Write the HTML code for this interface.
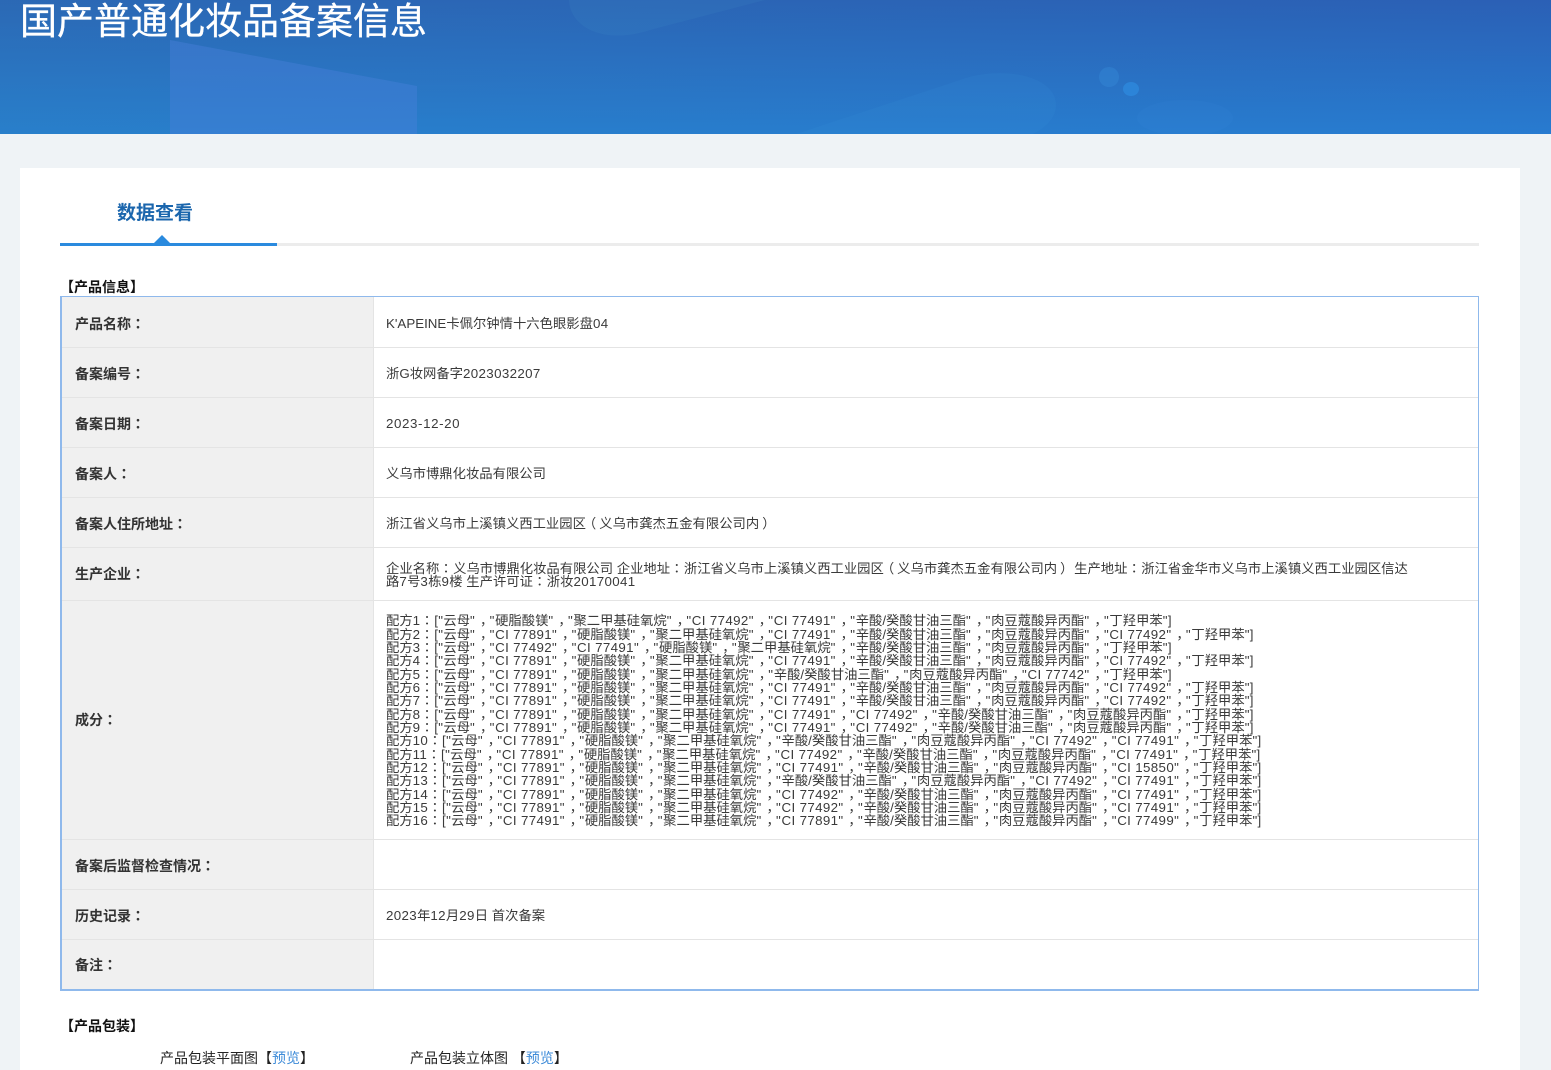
<!DOCTYPE html>
<html><head><meta charset="utf-8"><title>国产普通化妆品备案信息</title>
<style>
*{box-sizing:border-box}
html,body{margin:0;padding:0}
body{width:1551px;height:1070px;overflow:hidden;position:relative;background:#eff3f6;font-family:"Liberation Sans","Noto Sans CJK SC",sans-serif;font-size:13.33px;color:#333}
.hd{position:absolute;left:0;top:0;width:1551px;height:134px;overflow:hidden;background:linear-gradient(90deg,rgba(44,125,185,.3),rgba(42,95,195,.15)),linear-gradient(180deg,#2b60b3,#2780d2)}
.hd svg{position:absolute;left:0;top:0}
h1{position:absolute;left:20px;top:-5px;margin:0;font-size:37px;line-height:54px;font-weight:400;color:#fff;white-space:nowrap;-webkit-text-stroke:.3px #fff}
.card{position:absolute;left:20px;top:168px;width:1500px;height:902px;background:#fff}
.tab{position:absolute;left:117px;top:199px;font-size:19px;line-height:28px;font-weight:700;color:#1b66ad;white-space:nowrap;transform:translateY(1px)}
.ln{position:absolute;left:60px;top:243px;width:1419px;height:3px;background:#ececec}
.ln2{position:absolute;left:60px;top:243px;width:217px;height:3px;background:#2a8ade}
.tri{position:absolute;left:154px;top:235px;width:0;height:0;border-left:8px solid transparent;border-right:8px solid transparent;border-bottom:8px solid #2a8ade}
.sec{position:absolute;font-size:14px;font-weight:700;color:#111;white-space:nowrap;line-height:18px}
.tbl{position:absolute;left:60px;top:296px;width:1419px;height:695px;border:2px solid #8fb9ec;border-width:1px 1px 2px 2px}
.lab{position:absolute;left:0;top:0;width:312px;height:100%;background:#f0f0f0;border-right:1px solid #e4e4e4}
.r{position:absolute;left:0;width:1416px;border-bottom:1px solid #e4e4e4;display:flex;align-items:center}
.r.last{border-bottom:0}
.r b{position:absolute;left:13px;font-size:14px;color:#333;white-space:nowrap;transform:translateY(1px)}
.r span{position:absolute;left:324px;width:1030px;color:#3a3a3a;line-height:13.33px;transform:translateY(1px)}
.pk{position:absolute;top:1049px;font-size:14px;color:#222;line-height:18px;white-space:nowrap}
.pk a{color:#3d8bd8}
i{font-style:normal;font-family:"Liberation Sans","Noto Sans CJK TC",sans-serif;font-feature-settings:"locl" 0}
.r span i{letter-spacing:.5px}
s{text-decoration:none;letter-spacing:.75px}
tt{font-family:inherit;position:relative;left:4.5px}
u{text-decoration:none;letter-spacing:.35px}
em{font-style:normal;position:relative}
</style></head><body>
<div class="hd">
<svg width="1551" height="134" viewBox="0 0 1551 134">
<path d="M170 40L417 86V134H170Z" fill="#4a80dc" fill-opacity=".42"/>
<path d="M569 0C570 28 605 45 650 30L765 0Z" fill="#4d9ad0" fill-opacity=".12"/>
<path d="M796 134L960 80C1000 65 1056 75 1056 105C1056 118 1045 128 1033 134Z" fill="#3a92dc" fill-opacity=".14"/>
<ellipse cx="1109" cy="77" rx="10" ry="10" fill="#3a8fdc" fill-opacity=".35"/>
<ellipse cx="1131" cy="89" rx="8" ry="7" fill="#2f8fe4" fill-opacity=".6"/>
<ellipse cx="1185" cy="118" rx="48" ry="18" fill="#3a8fe0" fill-opacity=".12"/>
</svg>
<h1>国产普通化妆品备案信息</h1>
</div>
<div class="card"></div>
<div class="tab">数据查看</div>
<div class="ln"></div><div class="ln2"></div><div class="tri"></div>
<div class="sec" style="left:60px;top:278px">【产品信息】</div>
<div class="tbl">
<div class="lab"></div>
<div class="r" style="top:1px;height:50px"><b>产品名称<i>：</i></b><span>K'APEINE卡佩尔钟情十六色眼影盘<u>04</u></span></div>
<div class="r" style="top:51px;height:50px"><b>备案编号<i>：</i></b><span>浙G妆网备字<u>2023032207</u></span></div>
<div class="r" style="top:101px;height:50px"><b>备案日期<i>：</i></b><span><u style="letter-spacing:.6px">2023-12-20</u></span></div>
<div class="r" style="top:151px;height:50px"><b>备案人<i>：</i></b><span>义乌市博鼎化妆品有限公司</span></div>
<div class="r" style="top:201px;height:50px"><b>备案人住所地址<i>：</i></b><span>浙江省义乌市上溪镇义西工业园区<em style="left:-3px">（</em>义乌市龚杰五金有限公司内<em style="left:3px">）</em></span></div>
<div class="r" style="top:251px;height:53px"><b style="transform:none">生产企业<i>：</i></b><span>企业名称<i>：</i>义乌市博鼎化妆品有限公司 企业地址<i>：</i>浙江省义乌市上溪镇义西工业园区<em style="left:-3px">（</em>义乌市龚杰五金有限公司内<em style="left:3px">）</em> 生产地址<i>：</i>浙江省金华市义乌市上溪镇义西工业园区信达路<u>7</u>号<u>3</u>栋<u>9</u>楼 生产许可证<i>：</i>浙妆<u>20170041</u></span></div>
<div class="r" style="top:304px;height:239px"><b style="transform:none">成分<i>：</i></b><span>配方<u>1</u><i>：</i><u>["</u>云母<s>"<tt>，</tt>"</s>硬脂酸镁<s>"<tt>，</tt>"</s>聚二甲基硅氧烷<s>"<tt>，</tt>"</s><u>CI 77492</u><s>"<tt>，</tt>"</s><u>CI 77491</u><s>"<tt>，</tt>"</s>辛酸/癸酸甘油三酯<s>"<tt>，</tt>"</s>肉豆蔻酸异丙酯<s>"<tt>，</tt>"</s>丁羟甲苯<u>"]</u><br>
配方<u>2</u><i>：</i><u>["</u>云母<s>"<tt>，</tt>"</s><u>CI 77891</u><s>"<tt>，</tt>"</s>硬脂酸镁<s>"<tt>，</tt>"</s>聚二甲基硅氧烷<s>"<tt>，</tt>"</s><u>CI 77491</u><s>"<tt>，</tt>"</s>辛酸/癸酸甘油三酯<s>"<tt>，</tt>"</s>肉豆蔻酸异丙酯<s>"<tt>，</tt>"</s><u>CI 77492</u><s>"<tt>，</tt>"</s>丁羟甲苯<u>"]</u><br>
配方<u>3</u><i>：</i><u>["</u>云母<s>"<tt>，</tt>"</s><u>CI 77492</u><s>"<tt>，</tt>"</s><u>CI 77491</u><s>"<tt>，</tt>"</s>硬脂酸镁<s>"<tt>，</tt>"</s>聚二甲基硅氧烷<s>"<tt>，</tt>"</s>辛酸/癸酸甘油三酯<s>"<tt>，</tt>"</s>肉豆蔻酸异丙酯<s>"<tt>，</tt>"</s>丁羟甲苯<u>"]</u><br>
配方<u>4</u><i>：</i><u>["</u>云母<s>"<tt>，</tt>"</s><u>CI 77891</u><s>"<tt>，</tt>"</s>硬脂酸镁<s>"<tt>，</tt>"</s>聚二甲基硅氧烷<s>"<tt>，</tt>"</s><u>CI 77491</u><s>"<tt>，</tt>"</s>辛酸/癸酸甘油三酯<s>"<tt>，</tt>"</s>肉豆蔻酸异丙酯<s>"<tt>，</tt>"</s><u>CI 77492</u><s>"<tt>，</tt>"</s>丁羟甲苯<u>"]</u><br>
配方<u>5</u><i>：</i><u>["</u>云母<s>"<tt>，</tt>"</s><u>CI 77891</u><s>"<tt>，</tt>"</s>硬脂酸镁<s>"<tt>，</tt>"</s>聚二甲基硅氧烷<s>"<tt>，</tt>"</s>辛酸/癸酸甘油三酯<s>"<tt>，</tt>"</s>肉豆蔻酸异丙酯<s>"<tt>，</tt>"</s><u>CI 77742</u><s>"<tt>，</tt>"</s>丁羟甲苯<u>"]</u><br>
配方<u>6</u><i>：</i><u>["</u>云母<s>"<tt>，</tt>"</s><u>CI 77891</u><s>"<tt>，</tt>"</s>硬脂酸镁<s>"<tt>，</tt>"</s>聚二甲基硅氧烷<s>"<tt>，</tt>"</s><u>CI 77491</u><s>"<tt>，</tt>"</s>辛酸/癸酸甘油三酯<s>"<tt>，</tt>"</s>肉豆蔻酸异丙酯<s>"<tt>，</tt>"</s><u>CI 77492</u><s>"<tt>，</tt>"</s>丁羟甲苯<u>"]</u><br>
配方<u>7</u><i>：</i><u>["</u>云母<s>"<tt>，</tt>"</s><u>CI 77891</u><s>"<tt>，</tt>"</s>硬脂酸镁<s>"<tt>，</tt>"</s>聚二甲基硅氧烷<s>"<tt>，</tt>"</s><u>CI 77491</u><s>"<tt>，</tt>"</s>辛酸/癸酸甘油三酯<s>"<tt>，</tt>"</s>肉豆蔻酸异丙酯<s>"<tt>，</tt>"</s><u>CI 77492</u><s>"<tt>，</tt>"</s>丁羟甲苯<u>"]</u><br>
配方<u>8</u><i>：</i><u>["</u>云母<s>"<tt>，</tt>"</s><u>CI 77891</u><s>"<tt>，</tt>"</s>硬脂酸镁<s>"<tt>，</tt>"</s>聚二甲基硅氧烷<s>"<tt>，</tt>"</s><u>CI 77491</u><s>"<tt>，</tt>"</s><u>CI 77492</u><s>"<tt>，</tt>"</s>辛酸/癸酸甘油三酯<s>"<tt>，</tt>"</s>肉豆蔻酸异丙酯<s>"<tt>，</tt>"</s>丁羟甲苯<u>"]</u><br>
配方<u>9</u><i>：</i><u>["</u>云母<s>"<tt>，</tt>"</s><u>CI 77891</u><s>"<tt>，</tt>"</s>硬脂酸镁<s>"<tt>，</tt>"</s>聚二甲基硅氧烷<s>"<tt>，</tt>"</s><u>CI 77491</u><s>"<tt>，</tt>"</s><u>CI 77492</u><s>"<tt>，</tt>"</s>辛酸/癸酸甘油三酯<s>"<tt>，</tt>"</s>肉豆蔻酸异丙酯<s>"<tt>，</tt>"</s>丁羟甲苯<u>"]</u><br>
配方<u>10</u><i>：</i><u>["</u>云母<s>"<tt>，</tt>"</s><u>CI 77891</u><s>"<tt>，</tt>"</s>硬脂酸镁<s>"<tt>，</tt>"</s>聚二甲基硅氧烷<s>"<tt>，</tt>"</s>辛酸/癸酸甘油三酯<s>"<tt>，</tt>"</s>肉豆蔻酸异丙酯<s>"<tt>，</tt>"</s><u>CI 77492</u><s>"<tt>，</tt>"</s><u>CI 77491</u><s>"<tt>，</tt>"</s>丁羟甲苯<u>"]</u><br>
配方<u>11</u><i>：</i><u>["</u>云母<s>"<tt>，</tt>"</s><u>CI 77891</u><s>"<tt>，</tt>"</s>硬脂酸镁<s>"<tt>，</tt>"</s>聚二甲基硅氧烷<s>"<tt>，</tt>"</s><u>CI 77492</u><s>"<tt>，</tt>"</s>辛酸/癸酸甘油三酯<s>"<tt>，</tt>"</s>肉豆蔻酸异丙酯<s>"<tt>，</tt>"</s><u>CI 77491</u><s>"<tt>，</tt>"</s>丁羟甲苯<u>"]</u><br>
配方<u>12</u><i>：</i><u>["</u>云母<s>"<tt>，</tt>"</s><u>CI 77891</u><s>"<tt>，</tt>"</s>硬脂酸镁<s>"<tt>，</tt>"</s>聚二甲基硅氧烷<s>"<tt>，</tt>"</s><u>CI 77491</u><s>"<tt>，</tt>"</s>辛酸/癸酸甘油三酯<s>"<tt>，</tt>"</s>肉豆蔻酸异丙酯<s>"<tt>，</tt>"</s><u>CI 15850</u><s>"<tt>，</tt>"</s>丁羟甲苯<u>"]</u><br>
配方<u>13</u><i>：</i><u>["</u>云母<s>"<tt>，</tt>"</s><u>CI 77891</u><s>"<tt>，</tt>"</s>硬脂酸镁<s>"<tt>，</tt>"</s>聚二甲基硅氧烷<s>"<tt>，</tt>"</s>辛酸/癸酸甘油三酯<s>"<tt>，</tt>"</s>肉豆蔻酸异丙酯<s>"<tt>，</tt>"</s><u>CI 77492</u><s>"<tt>，</tt>"</s><u>CI 77491</u><s>"<tt>，</tt>"</s>丁羟甲苯<u>"]</u><br>
配方<u>14</u><i>：</i><u>["</u>云母<s>"<tt>，</tt>"</s><u>CI 77891</u><s>"<tt>，</tt>"</s>硬脂酸镁<s>"<tt>，</tt>"</s>聚二甲基硅氧烷<s>"<tt>，</tt>"</s><u>CI 77492</u><s>"<tt>，</tt>"</s>辛酸/癸酸甘油三酯<s>"<tt>，</tt>"</s>肉豆蔻酸异丙酯<s>"<tt>，</tt>"</s><u>CI 77491</u><s>"<tt>，</tt>"</s>丁羟甲苯<u>"]</u><br>
配方<u>15</u><i>：</i><u>["</u>云母<s>"<tt>，</tt>"</s><u>CI 77891</u><s>"<tt>，</tt>"</s>硬脂酸镁<s>"<tt>，</tt>"</s>聚二甲基硅氧烷<s>"<tt>，</tt>"</s><u>CI 77492</u><s>"<tt>，</tt>"</s>辛酸/癸酸甘油三酯<s>"<tt>，</tt>"</s>肉豆蔻酸异丙酯<s>"<tt>，</tt>"</s><u>CI 77491</u><s>"<tt>，</tt>"</s>丁羟甲苯<u>"]</u><br>
配方<u>16</u><i>：</i><u>["</u>云母<s>"<tt>，</tt>"</s><u>CI 77491</u><s>"<tt>，</tt>"</s>硬脂酸镁<s>"<tt>，</tt>"</s>聚二甲基硅氧烷<s>"<tt>，</tt>"</s><u>CI 77891</u><s>"<tt>，</tt>"</s>辛酸/癸酸甘油三酯<s>"<tt>，</tt>"</s>肉豆蔻酸异丙酯<s>"<tt>，</tt>"</s><u>CI 77499</u><s>"<tt>，</tt>"</s>丁羟甲苯<u>"]</u></span></div>
<div class="r" style="top:543px;height:50px"><b>备案后监督检查情况<i>：</i></b><span></span></div>
<div class="r" style="top:593px;height:50px"><b>历史记录<i>：</i></b><span><u>2023</u>年<u>12</u>月<u>29</u>日 首次备案</span></div>
<div class="r last" style="top:643px;height:49px"><b style="transform:none">备注<i>：</i></b><span></span></div>
</div>
<div class="sec" style="left:60px;top:1017px">【产品包装】</div>
<div class="pk" style="left:160px">产品包装平面图【<a>预览</a>】</div>
<div class="pk" style="left:410px">产品包装立体图 【<a>预览</a>】</div>
</body></html>
